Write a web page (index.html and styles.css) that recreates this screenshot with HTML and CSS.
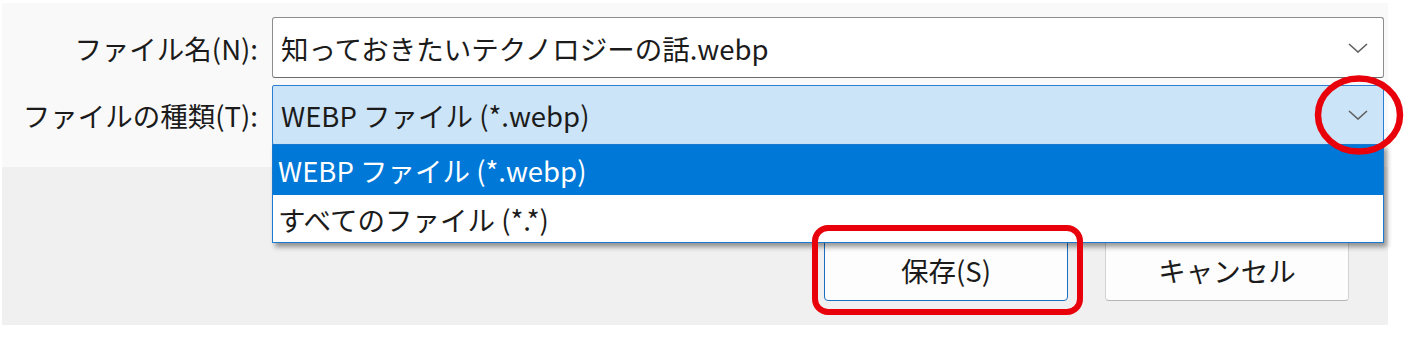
FILE: index.html
```html
<!DOCTYPE html>
<html lang="ja">
<head>
    <meta charset="UTF-8">
    <meta name="viewport" content="width=device-width, initial-scale=1.0">
    <title>名前を付けて保存</title>
    <link rel="stylesheet" href="styles.css">
</head>
<body>
    <div class="dialog">
        <!-- ファイル名と種類 -->
        <div class="fields">
            <label class="field-label">ファイル名(N):</label>
            <div class="combo name">
                <span class="combo-text">知っておきたいテクノロジーの話.webp</span>
                <span class="chevron">
                    <svg width="20" height="10" viewBox="0 0 20 10"><polyline points="1,1 10,9 19,1" /></svg>
                </span>
            </div>

            <label class="field-label">ファイルの種類(T):</label>
            <div class="combo type">
                <span class="combo-text">WEBP ファイル (*.webp)</span>
                <span class="chevron">
                    <svg width="20" height="10" viewBox="0 0 20 10"><polyline points="1,1 10,9 19,1" /></svg>
                    <svg class="mark-circle" width="90" height="80" viewBox="0 0 90 80"><ellipse cx="45" cy="40" rx="41" ry="36.5" /></svg>
                </span>
                <ul class="dropdown">
                    <li class="selected">WEBP ファイル (*.webp)</li>
                    <li>すべてのファイル (*.*)</li>
                </ul>
            </div>
        </div>

        <!-- ボタン -->
        <div class="buttons">
            <div class="btn-wrap">
                <button class="btn save">保存(S)</button>
                <span class="mark-box"></span>
            </div>
            <button class="btn">キャンセル</button>
        </div>
    </div>
</body>
</html>
```

FILE: styles.css
```css
body {
    margin: 0;
    background: #fff;
    font-family: "Noto Sans CJK JP", sans-serif;
    color: #1b1b1b;
}
.dialog {
    margin: 3px 0 0 2px;
    width: 1386px;
    height: 322px;
    display: flex;
    flex-direction: column;
}
.fields {
    background: #f9f9f9;
    height: 164px;
    box-sizing: border-box;
    padding: 14px 4px 0 0;
    display: grid;
    grid-template-columns: 256px 1fr;
    grid-template-rows: 61px 60px;
    column-gap: 14px;
    row-gap: 7px;
    position: relative;
    z-index: 2;
}
.field-label {
    display: flex;
    align-items: center;
    justify-content: flex-end;
    font-size: 27.5px;
    white-space: nowrap;
}
.combo {
    display: flex;
    align-items: center;
    justify-content: space-between;
    padding: 0 15px 0 8px;
    border-radius: 3px;
    font-size: 27.5px;
    position: relative;
}
.combo.name {
    background: #fff;
    border: 1px solid #8d8d8d;
    border-bottom-color: #6b6b6b;
}
.combo.type {
    background: #cce4f7;
    border: 1px solid #2a7fd4;
    border-radius: 2px;
}
.combo-text {
    white-space: nowrap;
}
.chevron {
    position: relative;
    display: flex;
}
.chevron polyline {
    fill: none;
    stroke: #5f5f5f;
    stroke-width: 1.6;
}
.mark-circle {
    position: absolute;
    left: -34px;
    top: -35px;
    z-index: 5;
}
.mark-circle ellipse {
    fill: none;
    stroke: #e8000b;
    stroke-width: 6.5;
}
/* 開いたドロップダウン */
.dropdown {
    position: absolute;
    left: -1px;
    right: -1px;
    top: 100%;
    margin: 0;
    padding: 0;
    list-style: none;
    background: #fff;
    border: 1px solid #1a78d0;
    box-shadow: 3px 4px 5px rgba(0, 0, 0, 0.4);
    z-index: 3;
}
.dropdown li {
    height: 47px;
    display: flex;
    align-items: center;
    padding-left: 5px;
    white-space: nowrap;
}
.dropdown li.selected {
    height: 50px;
    background: #0078d7;
    color: #fff;
}
.buttons {
    flex: 1;
    background: #f0f0f0;
    display: flex;
    justify-content: flex-end;
    align-items: flex-start;
    gap: 37px;
    padding: 71px 39px 0 0;
}
.btn-wrap {
    position: relative;
    display: flex;
}
.btn {
    width: 244px;
    height: 63px;
    border-radius: 4px;
    background: #fdfdfd;
    border: 1px solid #d3d3d3;
    border-bottom-color: #b5b5b5;
    font-family: inherit;
    font-size: 27.5px;
    color: #1b1b1b;
    padding: 0;
}
.btn.save {
    border: 1px solid #1b6fc2;
}
.mark-box {
    position: absolute;
    left: -12px;
    top: -13px;
    right: -15px;
    bottom: -14px;
    border: 6px solid #e8000b;
    border-radius: 16px;
    z-index: 6;
}
```
